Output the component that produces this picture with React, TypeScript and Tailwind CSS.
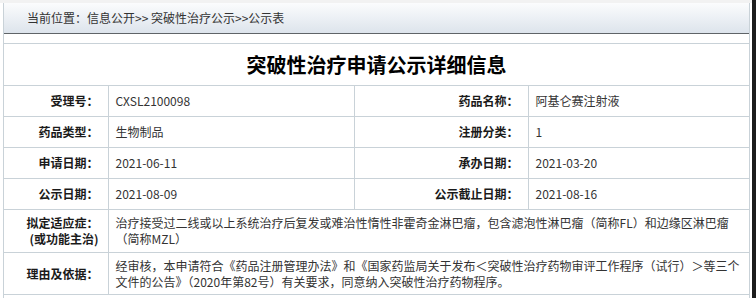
const rows = [
  ["受理号：", "CXSL2100098", "药品名称：", "阿基仑赛注射液"],
  ["药品类型：", "生物制品", "注册分类：", "1"],
  ["申请日期：", "2021-06-11", "承办日期：", "2021-03-20"],
  ["公示日期：", "2021-08-09", "公示截止日期：", "2021-08-16"],
];

const font = { fontFamily: '"Noto Sans CJK SC", "Liberation Sans", sans-serif' };

const App = () => {
  return (
    <div className="relative w-[756px] h-[298px] overflow-hidden bg-white text-[#222]" style={font}>
      {/* right dark edge */}
      <div className="absolute right-0 top-0 h-full w-[4px] bg-[#1c1c1c]" />
      <div className="h-[3px] w-[752px] bg-[#f2f2f2]" />
      <div className="ml-[3px] w-[747px] h-[295px] border-l border-r border-[#c9d2d8]">
        {/* Breadcrumb */}
        <div className="h-[31px] border-b border-[#5f6468] bg-gradient-to-b from-[#fbfcfd] to-[#dde4ec] pl-[23px] flex items-center text-[12px] text-[#333]">
          当前位置：信息公开&gt;&gt; 突破性治疗公示&gt;&gt;公示表
        </div>
        <div className="h-[9px]" />

        <table className="w-[745px] border-collapse table-fixed text-[12px]">
          <colgroup>
            <col className="w-[104px]" />
            <col className="w-[246px]" />
            <col className="w-[174px]" />
            <col className="w-[221px]" />
          </colgroup>
          <tbody>
            <tr className="h-[42px]">
              <td colSpan={4} className="border-t border-b border-[#c9d2d8] text-center text-[20px] font-bold text-black">
                突破性治疗申请公示详细信息
              </td>
            </tr>
            {rows.map((r) => (
              <tr key={r[0]} className="h-[31px]">
                <td className="border border-l-0 border-[#c9d2d8] text-right pr-[9px] font-bold text-[#1a1a1a]">{r[0]}</td>
                <td className="border border-[#c9d2d8] pl-[7px] text-[#333]">{r[1]}</td>
                <td className="border border-[#c9d2d8] text-right pr-[9px] font-bold text-[#1a1a1a]">{r[2]}</td>
                <td className="border border-r-0 border-[#c9d2d8] pl-[7px] text-[#333]">{r[3]}</td>
              </tr>
            ))}
            <tr className="h-[43px]">
              <td className="border border-l-0 border-[#c9d2d8] text-right pr-[9px] font-bold text-[#1a1a1a] leading-[16px]">
                拟定适应症：
                <br />
                (或功能主治)
              </td>
              <td colSpan={3} className="border border-r-0 border-[#c9d2d8] pl-[7px] text-[#333] leading-[16px] overflow-hidden">
                治疗接受过二线或以上系统治疗后复发或难治性惰性非霍奇金淋巴瘤，包含滤泡性淋巴瘤（简称FL）和边缘区淋巴瘤
                <br />
                （简称MZL）
              </td>
            </tr>
            <tr className="h-[42px]">
              <td className="border border-l-0 border-[#c9d2d8] text-right pr-[9px] font-bold text-[#1a1a1a]">理由及依据：</td>
              <td colSpan={3} className="border border-r-0 border-[#c9d2d8] pl-[7px] text-[#333] leading-[16px] overflow-hidden">
                经审核，本申请符合《药品注册管理办法》和《国家药监局关于发布＜突破性治疗药物审评工作程序（试行）＞等三个
                <br />
                文件的公告》（2020年第82号）有关要求，同意纳入突破性治疗药物程序。
              </td>
            </tr>
          </tbody>
        </table>
      </div>
    </div>
  );
};

export default App;
